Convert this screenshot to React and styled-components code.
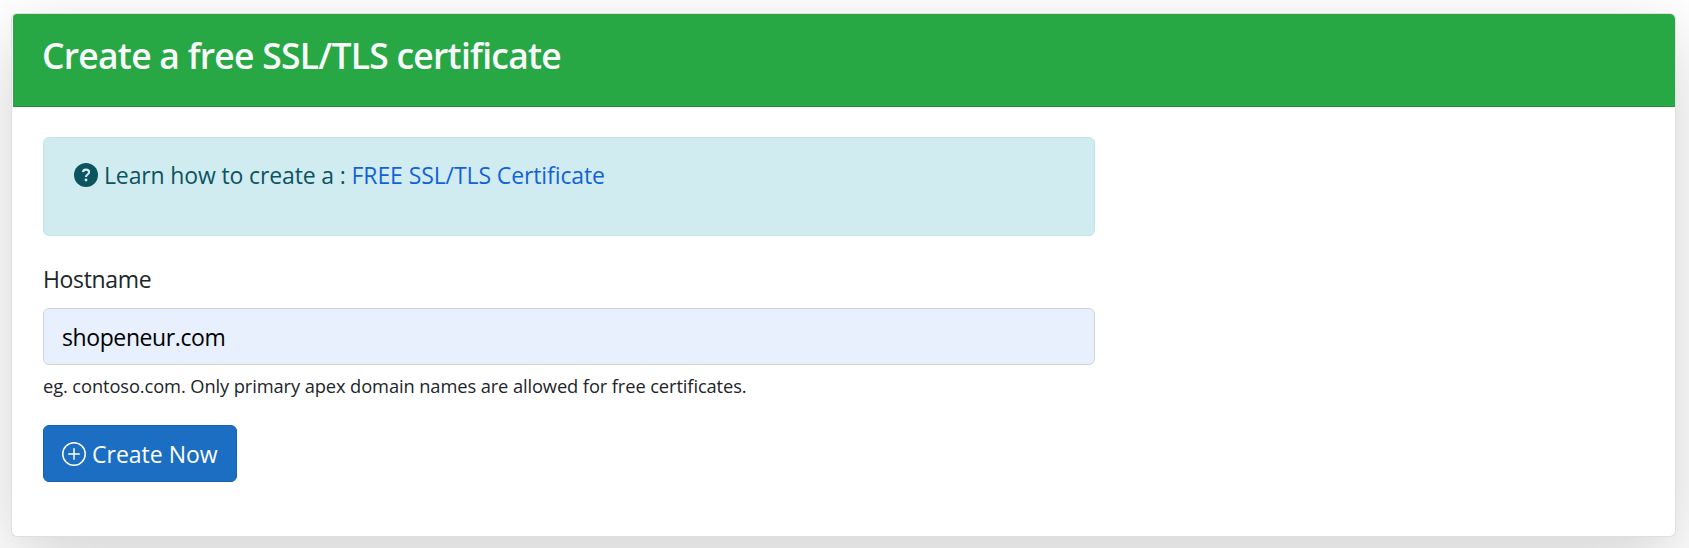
import React from "react";
import styled, { createGlobalStyle } from "styled-components";
import { BsPlusCircle } from "react-icons/bs";

const GlobalStyle = createGlobalStyle`
  *, *::before, *::after { box-sizing: border-box; }
  html, body { margin: 0; background: #fff; overflow: hidden; }
  body {
    font-family: "Segoe UI", "Open Sans", "Noto Sans", sans-serif;
    font-size: 23px;
    line-height: 36px;
    color: #212529;
  }
`;

const Page = styled.main`
  height: 548px;
  padding: 13px 13px 11px 11px;
`;

const Card = styled.section`
  height: 524px;
  display: flex;
  flex-direction: column;
  background: #fff;
  border: 1px solid rgba(0, 0, 0, 0.125);
  border-radius: 6px;
  box-shadow: 0 24px 72px rgba(0, 0, 0, 0.175);
`;

const CardHeader = styled.header`
  height: 93px;
  margin-left: 1px;
  padding: 20px 29px 0;
  background: #28a745;
  border-bottom: 1px solid rgba(0, 0, 0, 0.125);
  border-radius: 4px 5px 0 0;
`;

const Title = styled.h3`
  margin: 0;
  font-size: 35.5px;
  line-height: 43px;
  font-weight: 600;
  color: #f8f9fa;
  letter-spacing: -0.75px;
`;

const CardBody = styled.div`
  display: flex;
  flex-direction: column;
  align-items: flex-start;
  width: 1114px;
  padding: 30px 31px;
`;

const Alert = styled.div`
  width: 100%;
  height: 99px;
  padding: 19px 30px;
  display: flex;
  align-items: flex-start;
  color: #0c5460;
  background: #d1ecf1;
  border: 1px solid #bee5eb;
  border-radius: 6px;

  svg { margin: 6px 6px 0 0; }
`;

const Text = styled.span`
  white-space: pre;
  letter-spacing: ${(p) => p.$spacing || 0}px;
`;

const Link = styled.a`
  white-space: pre;
  color: #1162d9;
  text-decoration: none;
  letter-spacing: -0.1px;
`;

const Label = styled.label`
  margin-top: 25px;
  letter-spacing: -0.35px;
`;

const Input = styled.input`
  width: 100%;
  height: 57px;
  margin-top: 11px;
  padding: 0 18px;
  font: inherit;
  letter-spacing: -0.4px;
  color: #000;
  background: #e8f0fe;
  border: 1px solid #ced4da;
  border-radius: 6px;
  outline: none;
`;

const Help = styled.small`
  margin-top: 6px;
  font-size: 18.3px;
  line-height: 29px;
  letter-spacing: -0.1px;
`;

const Button = styled.button`
  width: 194px;
  height: 57px;
  margin-top: 25px;
  padding: 0 0 0 18px;
  display: flex;
  align-items: center;
  gap: 6px;
  font: inherit;
  color: #fff;
  background: #1b6ec2;
  border: 1px solid #1861ac;
  border-radius: 6px;
`;

function QuestionIcon() {
  return (
    <svg width="24" height="24" viewBox="0 0 24 24" fill="none" aria-hidden="true">
      <circle cx="12" cy="12" r="12" fill="currentColor" />
      <path
        d="M9 9.1C9.1 7.5 10.3 6.6 12 6.6c1.8 0 3.1 1 3.1 2.6 0 2.3-3.1 2.3-3.1 4.7"
        stroke="#d1ecf1"
        strokeWidth="2.1"
      />
      <circle cx="12" cy="17" r="1.45" fill="#d1ecf1" />
    </svg>
  );
}

export default function App() {
  return (
    <>
      <GlobalStyle />
      <Page>
        <Card>
          <CardHeader>
            <Title>Create a free SSL/TLS certificate</Title>
          </CardHeader>
          <CardBody>
            <Alert>
              <QuestionIcon />
              <Text $spacing={-0.14}>Learn how to create a : </Text>
              <Link href="#">FREE SSL/TLS Certificate</Link>
            </Alert>
            <Label htmlFor="hostname">Hostname</Label>
            <Input id="hostname" defaultValue="shopeneur.com" />
            <Help>eg. contoso.com. Only primary apex domain names are allowed for free certificates.</Help>
            <Button type="button">
              <BsPlusCircle size={24} />
              <Text>Create Now</Text>
            </Button>
          </CardBody>
        </Card>
      </Page>
    </>
  );
}
